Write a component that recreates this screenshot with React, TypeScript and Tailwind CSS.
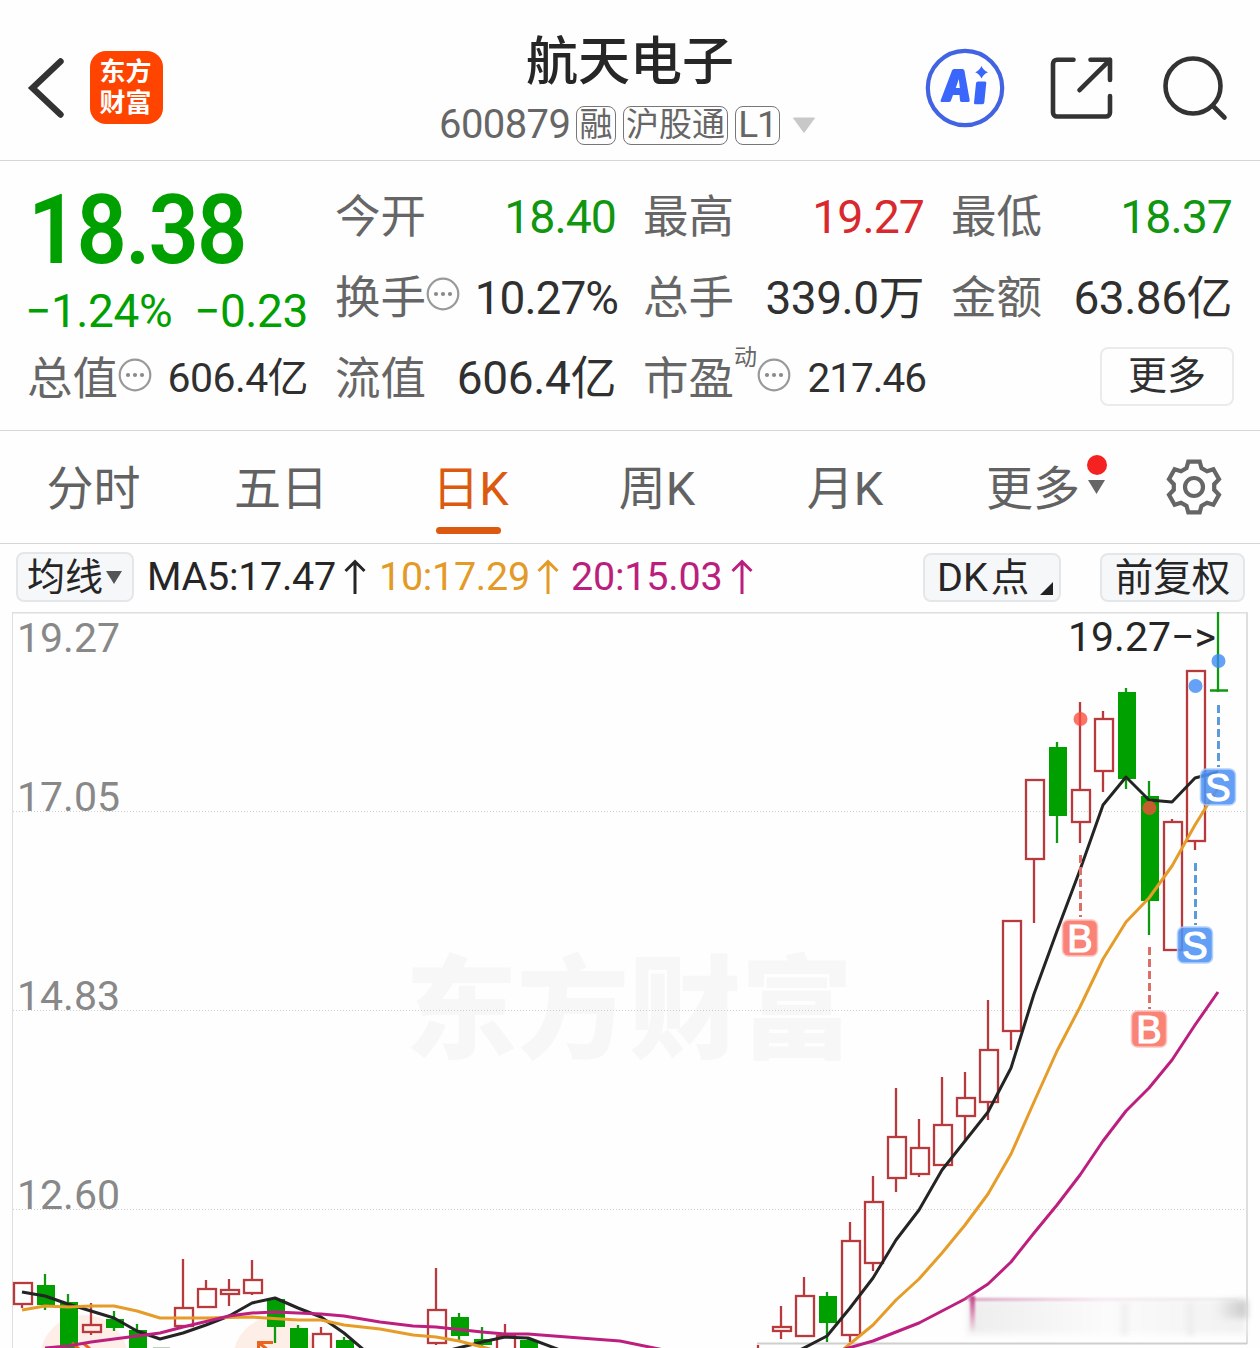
import type { ReactNode } from "react";

type Candle = [x: number, high: number, top: number, bottom: number, low: number, kind: "up" | "down"];

const candles: Candle[] = [
  [22, 1282, 1283, 1304, 1308, "up"],
  [45, 1274, 1285, 1305, 1310, "down"],
  [68, 1294, 1302, 1360, 1360, "down"],
  [91, 1303, 1325, 1332, 1335, "up"],
  [114, 1311, 1319, 1328, 1331, "down"],
  [137, 1324, 1330, 1360, 1360, "down"],
  [183, 1259, 1308, 1326, 1326, "up"],
  [206, 1280, 1289, 1307, 1307, "up"],
  [229, 1279, 1290, 1294, 1306, "up"],
  [252, 1260, 1280, 1293, 1295, "up"],
  [275, 1298, 1299, 1327, 1343, "down"],
  [298, 1325, 1328, 1360, 1360, "down"],
  [321, 1327, 1334, 1360, 1360, "up"],
  [344, 1337, 1340, 1360, 1360, "down"],
  [436, 1268, 1310, 1343, 1345, "up"],
  [459, 1313, 1317, 1336, 1340, "down"],
  [482, 1327, 1339, 1345, 1347, "down"],
  [505, 1324, 1336, 1360, 1360, "up"],
  [528, 1337, 1340, 1360, 1360, "down"],
  [758, 1345, 1355, 1360, 1360, "up"],
  [781, 1306, 1327, 1331, 1339, "up"],
  [804, 1277, 1296, 1336, 1337, "up"],
  [827, 1292, 1296, 1323, 1342, "down"],
  [850, 1222, 1241, 1335, 1342, "up"],
  [873, 1176, 1202, 1263, 1271, "up"],
  [896, 1088, 1137, 1178, 1192, "up"],
  [919, 1119, 1148, 1174, 1177, "up"],
  [942, 1077, 1125, 1165, 1165, "up"],
  [965, 1072, 1098, 1116, 1142, "up"],
  [988, 1000, 1050, 1102, 1120, "up"],
  [1011, 921, 921, 1031, 1050, "up"],
  [1034, 780, 780, 859, 923, "up"],
  [1057, 742, 747, 816, 843, "down"],
  [1080, 702, 790, 822, 843, "up"],
  [1103, 711, 719, 771, 792, "up"],
  [1126, 688, 692, 779, 789, "down"],
  [1149, 781, 796, 901, 935, "down"],
  [1172, 819, 822, 950, 950, "up"],
  [1195, 671, 671, 841, 850, "up"],
];

const ma5 = [
  "22,1292 45,1296 68,1304 91,1311 114,1318 137,1331 160,1339 183,1333 206,1325 229,1316 252,1303 275,1298 298,1308 321,1317 344,1333 364,1350",
  "450,1350 482,1342 505,1337 528,1338 560,1350",
  "800,1350 827,1336 850,1308 873,1278 896,1240 919,1210 942,1170 965,1141 988,1112 1011,1068 1034,994 1057,931 1080,870 1103,805 1126,777 1149,800 1172,802 1195,778 1218,772",
];
const ma10 = [
  "22,1310 45,1306 68,1307 91,1306 114,1306 137,1311 160,1318 206,1318 252,1317 298,1320 321,1320 344,1325 380,1329 413,1335 436,1337 459,1341 490,1349",
  "840,1352 873,1325 896,1300 919,1279 942,1253 965,1225 988,1194 1011,1154 1034,1102 1057,1051 1080,1007 1103,959 1126,922 1149,898 1172,866 1195,825 1218,788",
];
const ma20 = [
  "45,1348 68,1346 91,1342 137,1336 160,1333 183,1327 229,1316 252,1313 275,1312 321,1314 344,1316 380,1322 413,1326 436,1327 482,1332 505,1334 528,1334 580,1338 620,1341 664,1350",
  "845,1349 873,1341 896,1332 919,1323 942,1311 965,1299 988,1284 1011,1262 1034,1233 1057,1205 1080,1175 1103,1141 1126,1111 1149,1088 1172,1060 1195,1025 1218,992",
];

const trades = [
  { x: 1080, y: 938, dot: 719, from: 855, to: 917, side: "B" },
  { x: 1149, y: 1029, dot: 808, from: 947, to: 1009, side: "B" },
  { x: 1195, y: 945, dot: 686, from: 863, to: 925, side: "S" },
  { x: 1218, y: 787, dot: 661, from: 705, to: 767, side: "S" },
];

function InfoDot() {
  return (
    <svg className="size-[34px] shrink-0" viewBox="0 0 34 34">
      <circle cx="17" cy="17" r="15.3" fill="none" stroke="#999" strokeWidth="2.2" />
      <circle cx="10" cy="17" r="2.1" fill="#8a8a8a" />
      <circle cx="17" cy="17" r="2.1" fill="#8a8a8a" />
      <circle cx="24" cy="17" r="2.1" fill="#8a8a8a" />
    </svg>
  );
}

function Stat({ label, info, children }: { label: string; info?: boolean; children: ReactNode }) {
  return (
    <div className="flex h-[81px] items-center justify-between">
      <div className="-ml-px flex items-center pt-[3px] text-[45.5px] text-[#666]">
        {label}
        {info && (
          <span className="-mt-[11px]">
            <InfoDot />
          </span>
        )}
      </div>
      {children}
    </div>
  );
}

function Header() {
  return (
    <header className="flex h-[161px] items-start justify-between border-b border-[#d6d6d6]">
      <div className="flex w-[420px] items-center pt-[51px]">
        <svg className="ml-[26px] h-[62px] w-[40px]" viewBox="0 0 40 62">
          <path d="M34.5 4.500 6.500 31l28 26.500" fill="none" stroke="#333" strokeWidth="6.400" strokeLinecap="round" strokeLinejoin="miter" />
        </svg>
        <div className="ml-6 grid size-[73px] place-content-center rounded-[16px] bg-[#ff4400] pr-[2px] text-center text-[26px] leading-[31px] font-bold text-white">
          <div>东方</div>
          <div>财富</div>
        </div>
      </div>
      <div className="flex flex-col items-center">
        <h1 className="mt-[33px] text-[52px] leading-[60px] font-medium text-[#262626]">航天电子</h1>
        <div className="-ml-[5px] mt-[12px] flex h-[40px] items-center text-[#666]">
          <span className="w-[137px] text-[40px] tracking-[-0.6px]">600879</span>
          <span className="flex h-[39px] w-[40px] items-center justify-center rounded-[8px] border border-[#777] text-[33px]">融</span>
          <span className="ml-[7px] flex h-[39px] w-[105px] items-center justify-center rounded-[8px] border border-[#777] text-[33px]">沪股通</span>
          <span className="ml-[7px] flex h-[39px] w-[45px] items-center justify-center rounded-[8px] border border-[#777] text-[37px] tracking-[-1px]">L1</span>
          <svg className="ml-3 h-[17px] w-[24px]" viewBox="0 0 24 17">
            <path d="M1.500 1h21L12 15.500z" fill="#c8c8c8" stroke="#c8c8c8" strokeLinejoin="round" />
          </svg>
        </div>
      </div>
      <div className="flex w-[420px] items-center justify-end pt-[48px] pr-[32px]">
        <svg className="size-[80px]" viewBox="0 0 80 80">
          <circle cx="40" cy="40" r="37.200" fill="none" stroke="#4263e3" strokeWidth="4.200" />
          <path
            fill="#3a66fb"
            fillRule="evenodd"
            d="M27 22.500q.6-1.500 2-1.500h8.500q1.600 0 1.900 1.500l5.300 29.500q.3 2-1.500 2h-6.500q-1.500 0-1.700-1.500l-.5-5.500h-6.500l-2 5.500q-.6 1.500-2.200 1.500h-6.800q-2 0-1.200-2zM30.800 40h4l-1-9z"
          />
          <path fill="#3a66fb" d="M53 33.500h7q1.500 0 1.300 1.500l-2 19.500q-.2 1.800-1.900 1.800h-7q-1.600 0-1.400-1.600l2-19.500q.2-1.700 2-1.700z" />
          <path fill="#3a66fb" d="M56.500 18q1.800 4.400 6.500 6.300-4.500 1.800-6.500 6.200-1.900-4.500-6.300-6.200 4.400-1.800 6.300-6.300z" />
        </svg>
        <svg className="ml-[45px] size-[64px]" viewBox="0 0 64 64" fill="none" stroke="#333" strokeWidth="4.600" strokeLinecap="round" strokeLinejoin="round">
          <path d="M23.500 3.800H7a4 4 0 0 0-4 4V56.500a4 4 0 0 0 4 4H56a4 4 0 0 0 4-4V40" />
          <path d="M40.500 3.800H60V24M60 3.800 29.500 34.200" />
        </svg>
        <svg className="ml-[48px] size-[66px]" viewBox="0 0 66 66" fill="none" stroke="#333" strokeWidth="4.600" strokeLinecap="round">
          <circle cx="31" cy="31" r="27.500" />
          <path d="M51 51 62.500 62.500" />
        </svg>
      </div>
    </header>
  );
}

function Quote() {
  return (
    <section className="grid h-[270px] grid-cols-4 content-start gap-x-7 border-b border-[#d6d6d6] px-7 pt-[15px] text-[#303030]">
      <div className="row-span-2 text-[#00a000]">
        <div className="mt-[2px] h-[96px] origin-left scale-x-[0.92] text-[96px] leading-[104px] font-semibold tracking-[-2px]">18.38</div>
        <div className="-ml-[3px] mt-[10px] flex justify-between text-[46px] leading-[54px] tracking-[-0.4px]">
          <span>−1.24%</span>
          <span>−0.23</span>
        </div>
      </div>
      <Stat label="今开"><span className="pt-[2px] text-[46.500px] tracking-[-1px] text-[#109610]">18.40</span></Stat>
      <Stat label="最高"><span className="pt-[2px] text-[46.500px] tracking-[-1px] text-[#d8292f]">19.27</span></Stat>
      <Stat label="最低"><span className="pt-[2px] text-[46.500px] tracking-[-1px] text-[#109610]">18.37</span></Stat>
      <Stat label="换手" info><span className="-mr-[2px] pt-px text-[46px] tracking-[-1px]">10.27%</span></Stat>
      <Stat label="总手"><span className="pt-px text-[46px] tracking-[-0.5px]">339.0万</span></Stat>
      <Stat label="金额"><span className="pt-px text-[46px] tracking-[-0.5px]">63.86亿</span></Stat>
      <Stat label="总值" info><span className="text-[41px] tracking-[-0.6px]">606.4亿</span></Stat>
      <Stat label="流值"><span className="text-[46px] tracking-[-0.4px]">606.4亿</span></Stat>
      <div className="-ml-px flex h-[81px] items-center pt-[3px] text-[45.5px] text-[#666]">
        市盈
        <span className="-mt-[44px] text-[23px]">动</span>
        <span className="-mt-[11px] flex"><InfoDot /></span>
        <span className="-mt-[3px] -mr-[2px] ml-auto text-[40.500px] tracking-[-1px] text-[#303030]">217.46</span>
      </div>
      <div className="flex h-[81px] items-center justify-end">
        <button className="-mt-1 -mr-[2px] flex h-[59px] w-[134px] items-center justify-center rounded-[8px] border-2 border-[#ebebeb] text-[39px]">更多</button>
      </div>
    </section>
  );
}

function Tabs() {
  return (
    <nav className="flex h-[113px] border-b border-[#d3d6d6] text-[47px] text-[#626262]">
      {["分时", "五日", "日K", "周K", "月K"].map((tab, i) => (
        <div key={tab} className={i === 2 ? "flex w-[188px] flex-col items-center text-[#dc5a10]" : i === 0 ? "flex w-[187px] flex-col items-center" : "flex w-[188px] flex-col items-center"}>
          <span className={i === 2 ? "mt-[27px] ml-[3px] leading-[62px]" : "mt-[27px] leading-[62px]"}>{tab}</span>
          {i === 2 && <span className="mt-[7px] mr-[1px] h-[7px] w-[65px] rounded-full bg-[#dc5a10]" />}
        </div>
      ))}
      <div className="relative flex w-[188px] flex-col items-center">
        <span className="mt-[27px] leading-[62px]">更多</span>
        <span className="absolute top-[24px] left-[148px] size-5 rounded-full bg-[#f52222]" />
        <svg className="absolute top-[49px] left-[149px] h-[14px] w-[17px]" viewBox="0 0 17 14">
          <path d="M0 0h17L8.500 14z" fill="#666" />
        </svg>
      </div>
      <svg className="mt-[28px] ml-[39px] size-[56px]" viewBox="0 0 56 56" fill="none" stroke="#666" strokeWidth="4.200">
        <path d="M22.300 2.600H33.700L35.500 9.200 41 12.300 47.400 10.200 53 20.100 48.200 25.200V30.800L53 35.900 47.400 45.800 41 43.700 35.500 46.800 33.700 53.400H22.300L20.500 46.800 15 43.700 8.600 45.800 3 35.900 7.800 30.800V25.200L3 20.100 8.600 10.200 15 12.300 20.500 9.200z" />
        <circle cx="28" cy="28" r="9" />
      </svg>
    </nav>
  );
}

function Arrow() {
  return (
    <svg className="h-[36px] w-[22px]" viewBox="0 0 22 36" fill="none" stroke="currentColor" strokeWidth="3">
      <path d="M11 2.500V35M1.500 12 11 2.500 20.500 12" />
    </svg>
  );
}

function Toolbar() {
  return (
    <div className="flex h-[68px] items-start pl-4 text-[39.500px] leading-[48px] text-[#262626]">
      <div className="mt-[8px] flex h-[50px] w-[118px] items-center rounded-[8px] border-2 border-[#e4e7e9] bg-[#f6f7f9] pl-[9px] text-[38px]">
        均线
        <svg className="ml-[3px] h-[13px] w-[16px]" viewBox="0 0 16 13">
          <path d="M0 0h16L8 13z" fill="#555" />
        </svg>
      </div>
      <div className="mt-[9px] ml-[13px] flex w-[232px] items-center"><span className="w-[197px] tracking-[-0.3px]">MA5:17.47</span><Arrow /></div>
      <div className="mt-[9px] flex w-[192px] items-center text-[#e39a26]"><span className="w-[158px] tracking-[-0.3px]">10:17.29</span><Arrow /></div>
      <div className="mt-[9px] flex items-center text-[#bb1f7d]"><span className="w-[160px] tracking-[-0.2px]">20:15.03</span><Arrow /></div>
      <div className="relative mt-[9px] ml-auto flex h-[49px] w-[138px] items-center rounded-[8px] border-2 border-[#e4e7e9] bg-[#f6f7f9] pl-[12px]">
        DK<span className="ml-[3px] text-[38.500px]">点</span>
        <svg className="absolute right-[6px] bottom-[5px] size-[13px]" viewBox="0 0 13 13">
          <path d="M13 0v13H0z" fill="#222" />
        </svg>
      </div>
      <div className="mt-[9px] mr-[15px] ml-[39px] flex h-[49px] w-[145px] items-center justify-center rounded-[8px] border-2 border-[#e4e7e9] bg-[#f6f7f9] text-[38.500px]">前复权</div>
    </div>
  );
}

function Chart() {
  return (
    <div className="relative h-[736px] overflow-hidden">
      <svg className="block h-[736px] w-[1260px]" viewBox="0 612 1260 736" fontFamily="Roboto, 'Noto Sans CJK SC', sans-serif">
        <text x="405" y="1050" fontSize="112" fontWeight="900" fill="#f7f7f7">东方财富</text>
        <path d="M12 612.500H1248" stroke="#dedede" strokeWidth="2" />
        <path d="M12.500 612V1348" stroke="#dedede" />
        <path d="M1247 612V1344" stroke="#dedede" strokeWidth="2" />
        <path d="M13 811.500H1246M13 1010.500H1246M13 1209.500H1246" stroke="#cfcfcf" strokeDasharray="1 2" />
        <circle cx="84" cy="1359" r="44" fill="#fdeee8" />
        <circle cx="275" cy="1359" r="42" fill="#fdeee8" />
        <g fill="#888" fontSize="41">
          <text x="17" y="652">19.27</text>
          <text x="17" y="811">17.05</text>
          <text x="17" y="1010">14.83</text>
          <text x="17" y="1209">12.60</text>
        </g>
        {candles.map(([x, high, top, bottom, low, kind]) =>
          kind === "up" ? (
            <g key={x} stroke="#b93a3c" strokeWidth="2.300" fill="none">
              <path d={`M${x} ${high}V${top}M${x} ${bottom}V${low}`} />
              <rect x={x - 8} y={top} width="18" height={bottom - top} />
            </g>
          ) : (
            <g key={x} fill="#00a000">
              <path d={`M${x} ${high}V${low}`} stroke="#109810" strokeWidth="2.300" />
              <rect x={x - 8} y={top} width="18" height={bottom - top} />
            </g>
          ),
        )}
        <path d="M1218 612V692M1210 690.500H1228" stroke="#109810" strokeWidth="2.300" />
        <path d="M153 1347.500H170" stroke="#bcd0bc" />
        <path d="M257 1342.500H273M258.500 1342V1350M258 1342 268 1350M72 1343 79 1349M83 1343 90 1349" stroke="#ea6420" strokeWidth="3" />
        <path d="M757 1343.500H1247" stroke="#cfcfcf" strokeWidth="2" />
        <g fill="none" strokeWidth="3" strokeLinejoin="round">
          {ma5.map((p) => <polyline key={p} points={p} stroke="#242424" />)}
          {ma10.map((p) => <polyline key={p} points={p} stroke="#e59c28" />)}
          {ma20.map((p) => <polyline key={p} points={p} stroke="#bd1f7e" />)}
        </g>
        {trades.map(({ x, y, dot, from, to, side }) => {
          const sell = side === "S";
          return (
            <g key={x}>
              <circle cx={x + 0.500} cy={dot} r="7" fill={sell ? "#3987f5" : "#fb4b3c"} opacity="0.780" />
              <path d={`M${x + 0.500} ${from}V${to}`} stroke={sell ? "#5b9bdc" : "#dc6e68"} strokeWidth="3" strokeDasharray="8 4" />
              <rect x={x - 17.500} y={y - 18} width="35" height="36" rx="6" fill={sell ? "#4f93f6" : "#fa7365"} stroke={sell ? "#a9cbfb" : "#fdbab2"} strokeWidth="1.500" opacity="0.880" />
              <text x={x} y={y + 13.500} fontSize="38" fontFamily="Liberation Sans" fill="#fff" stroke="#fff" strokeWidth="1.200" textAnchor="middle">{side}</text>
            </g>
          );
        })}
        <text x="1068" y="651" fontSize="41" fill="#262626">19.27−&gt;</text>
      </svg>
      <div className="absolute top-[688px] left-[968px] h-[34px] w-[278px] bg-gradient-to-r from-[#ededed] via-[#fbfbfb] to-[#f1f1f1] blur-[3px]" />
      <div className="absolute top-[686px] left-[968px] h-[3px] w-[270px] bg-gradient-to-r from-[#d9a0c2] via-[#f5e8f0] to-[#ededed] blur-[1px]" />
      <div className="absolute top-[684px] left-[970px] h-[36px] w-[5px] bg-gradient-to-b from-[#bd3d89] to-[#eee] blur-[1px]" />
      <div className="absolute top-[691px] left-[1121px] h-[32px] w-[7px] bg-[#f0f0f0] blur-[2px]" />
      <div className="absolute top-[691px] left-[1187px] h-[32px] w-[7px] bg-[#eeeeee] blur-[2px]" />
      <div className="absolute top-[688px] left-[1216px] h-[18px] w-[31px] bg-gradient-to-r from-transparent to-[#c8c8c8] blur-[3px]" />
    </div>
  );
}

export default function App() {
  return (
    <main className="h-[1348px] w-[1260px] overflow-hidden bg-[#fefefe] font-[Roboto,'Noto_Sans_CJK_SC',sans-serif] whitespace-nowrap">
      <Header />
      <Quote />
      <Tabs />
      <Toolbar />
      <Chart />
    </main>
  );
}
